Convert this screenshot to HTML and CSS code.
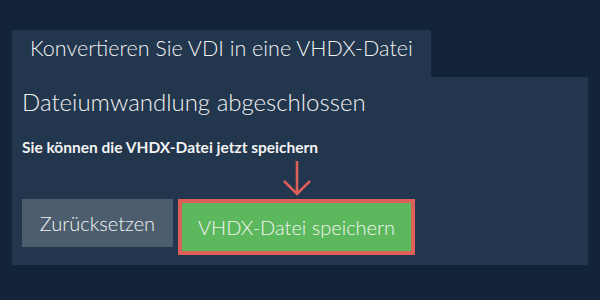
FILE: index.html
```html
<!DOCTYPE html>
<html lang="de">
<head>
  <meta charset="UTF-8">
  <title>VDI in VHDX konvertieren</title>
  <link rel="stylesheet" href="styles.css">
</head>
<body>

<div class="wrap">
  <div class="tab">Konvertieren Sie VDI in eine VHDX-Datei</div>

  <div class="panel">
    <h2>Dateiumwandlung abgeschlossen</h2>
    <p class="note">Sie können die VHDX-Datei jetzt speichern</p>

    <div class="actions">
      <button class="btn btn-reset">Zurücksetzen</button>
      <div class="save-wrap">
        <!-- pointer arrow above the save button -->
        <svg class="arrow" width="28" height="35" viewBox="0 0 28 35">
          <path d="M14 0 V33 M1 20 L14 33 L27 20" fill="none" stroke="#dc5f5a" stroke-width="2.6"/>
        </svg>
        <button class="btn btn-save">VHDX-Datei speichern</button>
      </div>
    </div>
  </div>
</div>

</body>
</html>
```

FILE: styles.css
```css
body {
  margin: 0;
  background-color: #12233a;
  font-family: Lato, "Open Sans", sans-serif;
  color: #f2f2f2;
}

.wrap {
  padding: 30px 0 0 12px;
}

.tab {
  display: inline-block;
  background-color: #22364d;
  font-size: 21.5px;
  font-weight: 300;
  height: 47px;
  line-height: 37px;
  padding: 0 18px;
  box-sizing: border-box;
}

.panel {
  width: 576px;
  background-color: #22364d;
  padding: 10px 10px 10px 10px;
  box-sizing: border-box;
}

h2 {
  margin: 0;
  font-size: 24px;
  font-weight: 300;
  line-height: 29px;
}

.note {
  margin: 22px 0 0 0;
  font-size: 15.5px;
  font-weight: bold;
  line-height: 19px;
}

.actions {
  display: flex;
  align-items: flex-start;
  gap: 5px;
  margin-top: 42px;
}

.btn {
  border: none;
  font-family: inherit;
  font-size: 20px;
  font-weight: 300;
  color: #f4f4f4;
  cursor: pointer;
  padding: 0;
}

.btn-reset {
  background-color: #4c5d6e;
  width: 151px;
  height: 48px;
}

.save-wrap {
  position: relative;
}

.arrow {
  position: absolute;
  left: 50%;
  bottom: calc(100% + 3px);
  margin-left: -14px;
}

.btn-save {
  display: block;
  background-color: #5cb85c;
  width: 237px;
  height: 56px;
  border: 4px solid #dc5f5a;
  box-sizing: border-box;
}
```
